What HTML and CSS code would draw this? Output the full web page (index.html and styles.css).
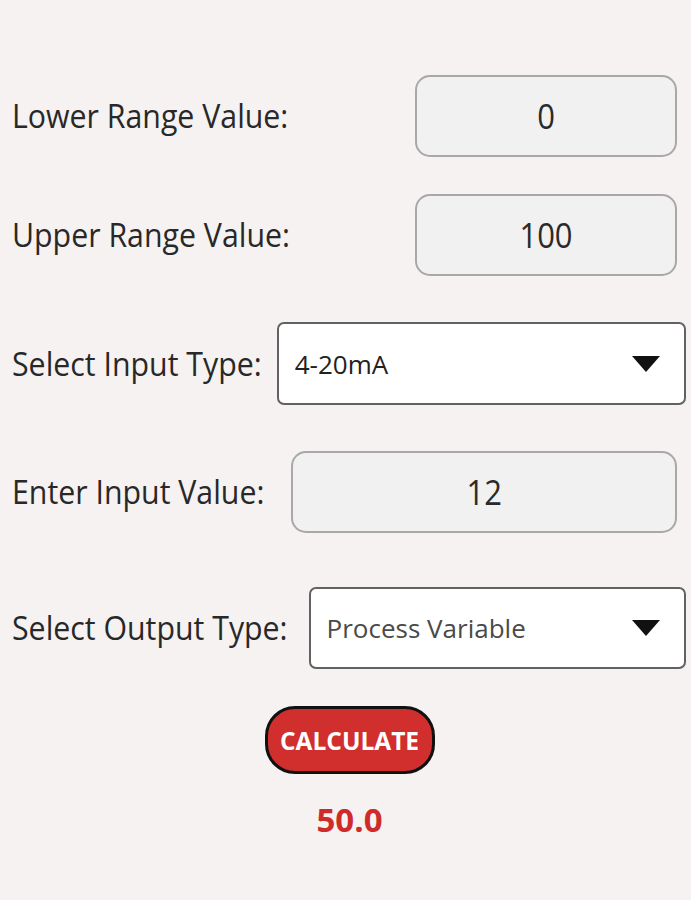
FILE: index.html
```html
<!DOCTYPE html>
<html>
<head>
<meta charset="utf-8">
<link rel="stylesheet" href="styles.css">
</head>
<body>
<main class="form">
  <div class="row row-lower">
    <span class="label">Lower Range Value:</span>
    <div class="field input fixed"><span class="num">0</span></div>
  </div>
  <div class="row row-upper">
    <span class="label">Upper Range Value:</span>
    <div class="field input fixed"><span class="num">100</span></div>
  </div>
  <div class="row row-intype">
    <span class="label">Select Input Type:</span>
    <div class="field select gap-in">
      <span class="sel-text">4-20mA</span>
      <svg class="caret" width="28" height="16" viewBox="0 0 28 16"><path d="M0 0H28L14 16Z" fill="#111"/></svg>
    </div>
  </div>
  <div class="row row-inval">
    <span class="label">Enter Input Value:</span>
    <div class="field input gap-val"><span class="num">12</span></div>
  </div>
  <div class="row row-outtype">
    <span class="label">Select Output Type:</span>
    <div class="field select gap-out">
      <span class="sel-text grey">Process Variable</span>
      <svg class="caret" width="28" height="16" viewBox="0 0 28 16"><path d="M0 0H28L14 16Z" fill="#111"/></svg>
    </div>
  </div>
  <div class="actions">
    <button class="calc">CALCULATE</button>
    <div class="result">50.0</div>
  </div>
</main>
</body>
</html>
```

FILE: styles.css
```css
html, body {
  margin: 0;
  padding: 0;
  background: #f6f2f1;
}
body {
  font-family: "Open Sans", "DejaVu Sans", sans-serif;
  color: #2a2a2a;
  width: 691px;
  height: 900px;
  overflow: hidden;
}
.form {
  display: flex;
  flex-direction: column;
  padding: 75px 0 0 12px;
}
.row {
  display: flex;
  align-items: center;
  height: 82px;
}
.row-lower { padding-right: 14px; }
.row-upper { margin-top: 37px; padding-right: 14px; }
.row-intype { margin-top: 46px; height: 83px; padding-right: 5px; }
.row-inval { margin-top: 46px; padding-right: 14px; }
.row-outtype { margin-top: 54px; padding-right: 5px; }

.label, .num {
  display: inline-block;
  font-size: 30.3px;
  line-height: 40px;
  color: #282828;
  flex: none;
  white-space: nowrap;
  transform: scaleY(1.1);
}
.field {
  box-sizing: border-box;
  height: 100%;
  display: flex;
  align-items: center;
}
.input {
  background: #f2f1f1;
  border: 2px solid #a9a7a7;
  border-radius: 15px;
  justify-content: center;
}
.num {
  font-size: 31px;
  color: #2a2a2a;
}
.fixed {
  width: 262px;
  margin-left: auto;
}
.gap-in { flex: 1; margin-left: 15px; }
.gap-val { flex: 1; margin-left: 27px; }
.gap-out { flex: 1; margin-left: 21px; }
.select {
  background: #ffffff;
  border: 2px solid #626262;
  border-radius: 7px;
  justify-content: space-between;
  padding: 0 24px 0 16px;
}
.sel-text {
  font-size: 26px;
  color: #222;
  white-space: nowrap;
}
.sel-text.grey { color: #4a4a4a; }
.caret { flex: none; }

.actions {
  display: flex;
  flex-direction: column;
  align-items: center;
  margin-top: 37px;
  margin-left: -12px;
  width: 699px;
}
.calc {
  box-sizing: border-box;
  width: 170px;
  height: 68px;
  background: #d12e2e;
  border: 3px solid #111;
  border-radius: 30px;
  color: #fff;
  font-family: "Open Sans", sans-serif;
  font-weight: 700;
  font-size: 24.5px;
  padding: 0;
}
.result {
  margin-top: 26px;
  color: #cf2b2b;
  font-weight: 700;
  font-size: 33px;
  line-height: 40px;
}
```
